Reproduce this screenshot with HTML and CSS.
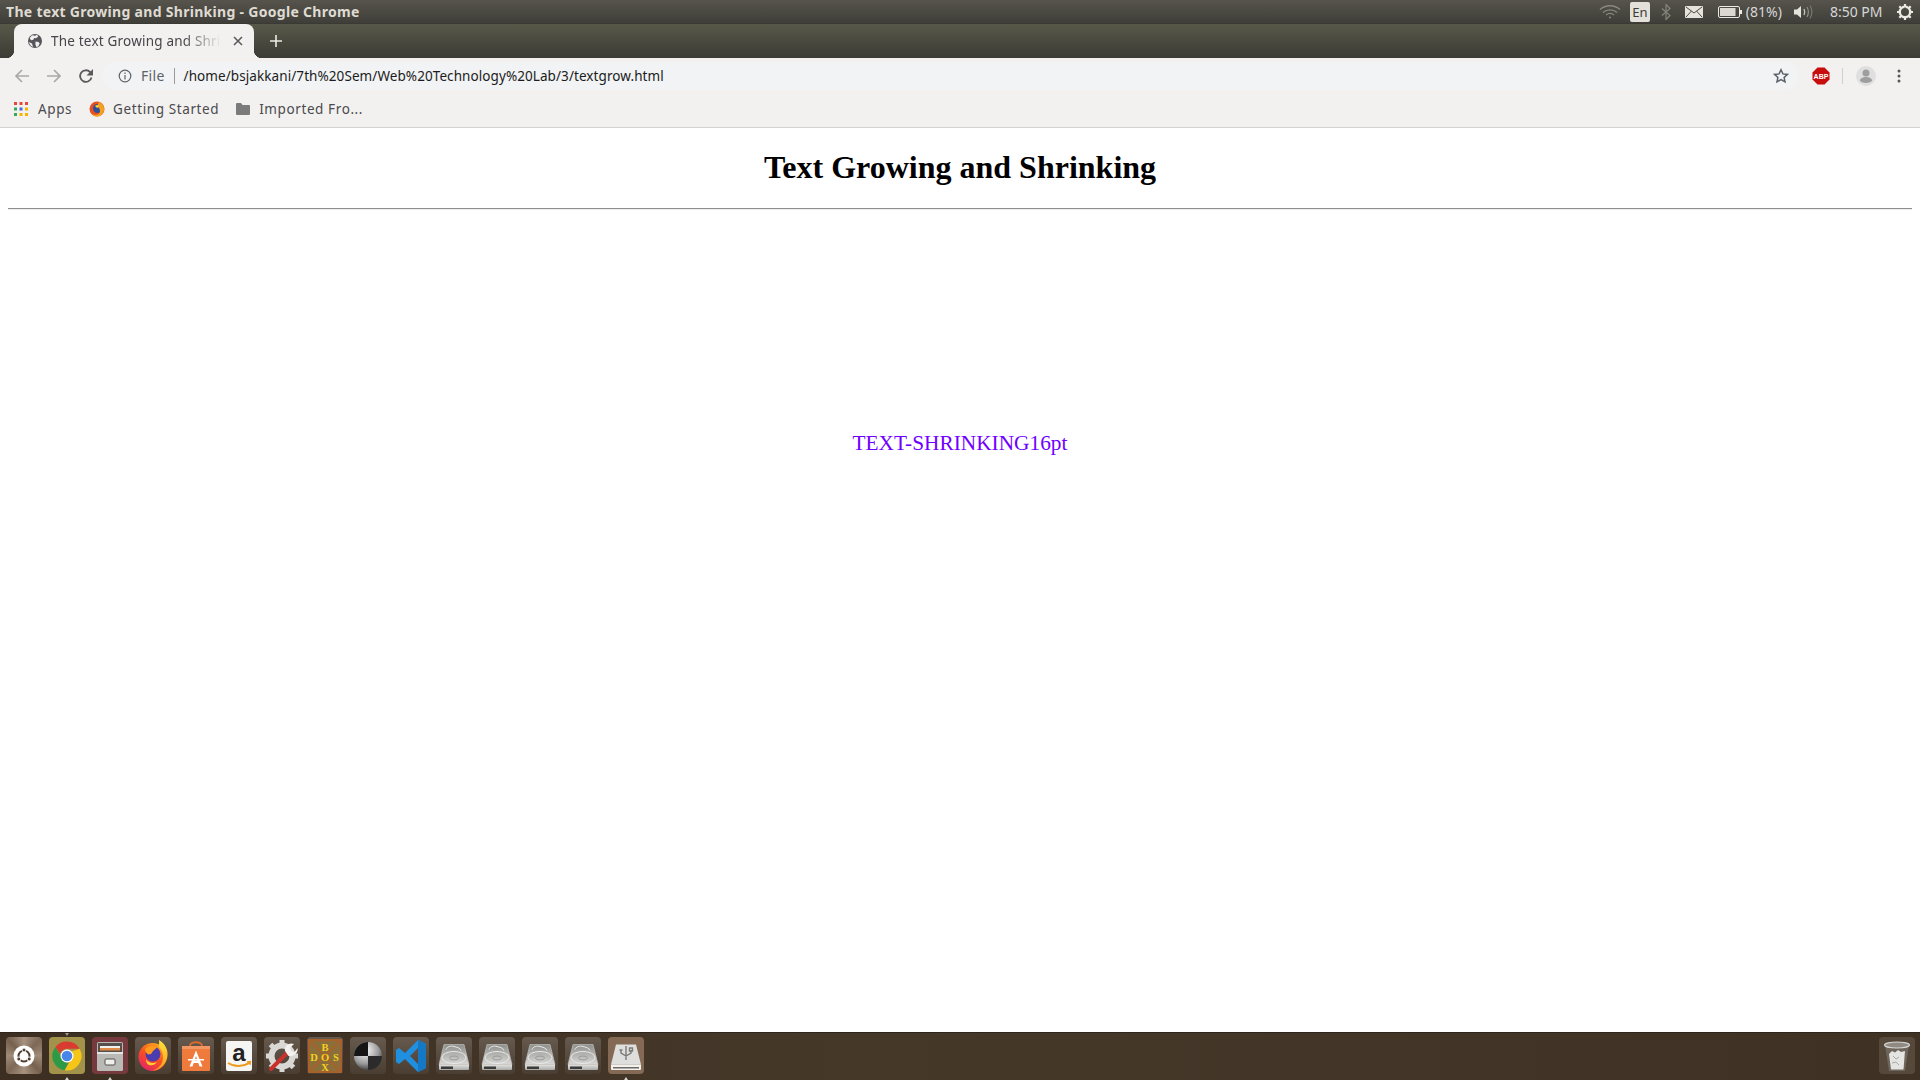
FILE: index.html
```html
<!DOCTYPE html>
<html lang="en">
<head>
<meta charset="utf-8">
<title>The text Growing and Shrinking</title>
<link rel="stylesheet" href="styles.css">
</head>
<body>
<svg class="defs" width="0" height="0" aria-hidden="true">
  <defs>
    <linearGradient id="hddTop" x1="0" y1="0" x2="0" y2="1"><stop offset="0" stop-color="#8f8f8c"/><stop offset="1" stop-color="#d8d8d6"/></linearGradient>
    <linearGradient id="hddFront" x1="0" y1="0" x2="0" y2="1"><stop offset="0" stop-color="#e4e4e2"/><stop offset="1" stop-color="#a9a9a7"/></linearGradient>
    <radialGradient id="ball" cx=".4" cy=".3" r=".8"><stop offset="0" stop-color="#fff"/><stop offset=".6" stop-color="#999"/><stop offset="1" stop-color="#222"/></radialGradient>
    <linearGradient id="fxBody" x1=".8" y1="0" x2=".2" y2="1"><stop offset="0" stop-color="#ffb01f"/><stop offset=".5" stop-color="#f9501f"/><stop offset="1" stop-color="#e3226b"/></linearGradient>
    <linearGradient id="fxFlame" x1=".5" y1="0" x2=".5" y2="1"><stop offset="0" stop-color="#ffe23a"/><stop offset="1" stop-color="#ff9a1c"/></linearGradient>
    <symbol id="hdd" viewBox="0 0 36 36">
      <path d="M8 6.500h20l5 20H3z" fill="url(#hddTop)" stroke="#bdbdbb" stroke-width=".7"/>
      <path d="M3 26.500h30v4.500a1 1 0 0 1-1 1H4a1 1 0 0 1-1-1z" fill="url(#hddFront)"/>
      <rect x="5" y="28.500" width="12" height="2.500" fill="#3b3b3a"/>
      <ellipse cx="18" cy="19.500" rx="12" ry="6" fill="none" stroke="#e9e9e7" stroke-width="1"/>
      <ellipse cx="18" cy="20" rx="4.500" ry="2" fill="none" stroke="#9b9b99" stroke-width="1"/>
      <path d="M10 11.500c1-3 5-4 8-3 3 .7 6 1.500 7 4" fill="none" stroke="#e9e9e7" stroke-width="1"/>
    </symbol>
  </defs>
</svg>

<header class="panel">
  <span class="panel-title">The text Growing and Shrinking - Google Chrome</span>
  <div class="indicators">
    <svg class="ind-wifi" width="22" height="16" viewBox="0 0 22 16" fill="none" stroke="#8a897f" stroke-width="1.300"><path d="M1 5.500c5.500-5 14.500-5 20 0"/><path d="M4 8.500c4-3.500 10-3.500 14 0"/><path d="M7 11c2.500-2 5.500-2 8 0"/><circle cx="11" cy="13.500" r="1" fill="#8a897f" stroke="none"/></svg>
    <span class="ind-lang">En</span>
    <svg class="ind-bt" width="10" height="16" viewBox="0 0 10 16" fill="none" stroke="#85847b" stroke-width="1.200"><path d="M1 4.500l8 7-4 4V.5l4 4-8 7"/></svg>
    <svg class="ind-mail" width="18" height="12" viewBox="0 0 18 12"><rect width="18" height="12" rx="1" fill="#e6e3de"/><path d="M1 1l8 6 8-6M1 11l5.500-6M17 11l-5.500-6" fill="none" stroke="#4b4a42" stroke-width="1"/></svg>
    <svg class="ind-batt" width="24" height="12" viewBox="0 0 24 12"><rect x=".5" y=".5" width="21" height="11" rx="1.500" fill="none" stroke="#eceae5"/><rect x="2" y="2" width="15.500" height="8" fill="#dcd9d2"/><rect x="22" y="4" width="2" height="4" fill="#eceae5"/></svg>
    <span class="ind-text ind-pct">(81%)</span>
    <svg class="ind-vol" width="20" height="16" viewBox="0 0 20 16" fill="none"><path d="M0 5.500h3l4-3.500v12l-4-3.500H0z" fill="#e6e3de"/><path d="M10 5c1 2 1 4 0 6" stroke="#c9c7c0" stroke-width="1.300"/><path d="M13 3c1.700 3 1.700 7 0 10" stroke="#8f8e85" stroke-width="1.200"/><path d="M16 1.500c2.300 4 2.300 9 0 13" stroke="#77766d" stroke-width="1.200"/></svg>
    <span class="ind-text ind-time">8:50 PM</span>
    <svg class="ind-gear" width="16" height="16" viewBox="0 0 16 16"><circle cx="8" cy="8" r="5.200" fill="none" stroke="#eceae5" stroke-width="2.400"/><path d="M8 0v3M8 13v3M0 8h3M13 8h3M2.300 2.300l2 2M11.700 11.700l2 2M2.300 13.700l2-2M11.700 4.300l2-2" stroke="#eceae5" stroke-width="2.200"/><path d="M8 3.500v4" stroke="#4b4a42" stroke-width="1.500"/></svg>
  </div>
</header>

<div class="tabstrip">
  <div class="tab">
    <svg class="tab-globe" width="16" height="16" viewBox="0 0 16 16"><circle cx="8" cy="8" r="7" fill="#55555a"/><path d="M5 2.200l3 .6 2.300-1 .8 2-2 1.500-1.800-.3-1 1.700-2.300.5L2.600 5zM8.500 8.500l3 .5 1.200 1.500-1.500 3-1.800.5-1-2.500zM2 9l3 1.500 1 3.500C4 13.500 2.500 11.500 2 9z" fill="#f1efed"/></svg>
    <span class="tab-title">The text Growing and Shri</span>
    <svg class="tab-close" width="10" height="10" viewBox="0 0 10 10"><path d="M1 1l8 8M9 1L1 9" stroke="#56565a" stroke-width="1.500"/></svg>
  </div>
  <svg class="newtab" width="12" height="12" viewBox="0 0 12 12"><path d="M6 0v12M0 6h12" stroke="#ecebe6" stroke-width="1.600"/></svg>
</div>

<div class="toolbar">
  <svg class="nav nav-back" width="16" height="16" viewBox="0 0 16 16" fill="none" stroke="#a9a9a9" stroke-width="1.700"><path d="M15 8H2M8 2L2 8l6 6"/></svg>
  <svg class="nav nav-fwd" width="16" height="16" viewBox="0 0 16 16" fill="none" stroke="#a9a9a9" stroke-width="1.700"><path d="M1 8h13M8 2l6 6-6 6"/></svg>
  <svg class="nav nav-reload" width="16" height="16" viewBox="0 0 16 16" fill="none"><path d="M13.500 9.500a5.800 5.800 0 1 1-1.500-5.500L14 6" stroke="#5a5a5c" stroke-width="1.800"/><path d="M15 1v6.500H8.500z" fill="#5a5a5c"/></svg>
  <div class="omnibox">
    <svg class="info" width="14" height="14" viewBox="0 0 14 14" fill="none" stroke="#5f6368" stroke-width="1.200"><circle cx="7" cy="7" r="5.800"/><path d="M7 6v4.500M7 3.500v1.500"/></svg>
    <span class="scheme">File</span>
    <span class="omni-sep"></span>
    <span class="url">/home/bsjakkani/7th%20Sem/Web%20Technology%20Lab/3/textgrow.html</span>
    <svg class="star" width="16" height="16" viewBox="0 0 16 16" fill="none" stroke="#5c6068" stroke-width="1.500"><path d="M8 1.800l1.900 4.100 4.500.5-3.300 3 .9 4.500L8 11.600l-4 2.300.9-4.500-3.300-3 4.500-.5z"/></svg>
  </div>
  <div class="extensions">
    <svg class="abp" width="18" height="18" viewBox="0 0 18 18"><path d="M5.500 .5h7l5 5v7l-5 5h-7l-5-5v-7z" fill="#c70d0d"/><text x="9" y="12" text-anchor="middle" class="abp-text">ABP</text></svg>
    <span class="ext-sep"></span>
    <svg class="avatar" width="20" height="20" viewBox="0 0 20 20"><circle cx="10" cy="10" r="10" fill="#dfdfdf"/><circle cx="10" cy="7" r="3.500" fill="#9e9e9e"/><path d="M4 15c0-3 3-4 6-4s6 1 6 4c-3 2.500-9 2.500-12 0z" fill="#9e9e9e"/></svg>
    <svg class="menu" width="4" height="14" viewBox="0 0 4 14"><circle cx="2" cy="2" r="1.500" fill="#56565a"/><circle cx="2" cy="7" r="1.500" fill="#56565a"/><circle cx="2" cy="12" r="1.500" fill="#56565a"/></svg>
  </div>
</div>

<nav class="bookmarks">
  <span class="bm bm-apps">
    <svg width="14" height="14" viewBox="0 0 14 14"><rect width="3" height="3" fill="#e8453c"/><rect x="5.500" width="3" height="3" fill="#e8453c"/><rect x="11" width="3" height="3" fill="#e8453c"/><rect y="5.500" width="3" height="3" fill="#34a853"/><rect x="5.500" y="5.500" width="3" height="3" fill="#4a67e0"/><rect x="11" y="5.500" width="3" height="3" fill="#f4b400"/><rect y="11" width="3" height="3" fill="#34a853"/><rect x="5.500" y="11" width="3" height="3" fill="#f4b400"/><rect x="11" y="11" width="3" height="3" fill="#f4b400"/></svg>
    Apps
  </span>
  <span class="bm bm-fx">
    <svg width="16" height="16" viewBox="0 0 16 16"><circle cx="8" cy="8" r="7.500" fill="#e8501f"/><circle cx="8.500" cy="7.500" r="4.500" fill="#2f4f9c"/><path d="M10 1c4 1.500 5.500 5 5 8s-3 6.500-7 6.500c-3 0-5-2-5-3 2 2 6 2 7.500-.5S10 6 8 5.500z" fill="#f4a21d"/><path d="M6 5c2-1.500 3.500-1 4 .5L8 7z" fill="#f6d23a"/></svg>
    Getting Started
  </span>
  <span class="bm bm-folder">
    <svg width="14" height="12" viewBox="0 0 14 12"><path d="M0 1a1 1 0 0 1 1-1h4l1.500 2H13a1 1 0 0 1 1 1v8a1 1 0 0 1-1 1H1a1 1 0 0 1-1-1z" fill="#7b7b7b"/></svg>
    Imported Fro...
  </span>
</nav>

<main class="page">
  <h1 class="heading">Text Growing and Shrinking</h1>
  <hr class="rule">
  <p class="shrink">TEXT-SHRINKING16pt</p>
</main>

<footer class="launcher">
  <div class="dock">
    <div class="tile tile-ubuntu"><svg viewBox="0 0 36 36"><circle cx="18" cy="18" r="10.500" fill="#fff"/><circle cx="18" cy="18" r="5.500" fill="none" stroke="#4f3a2c" stroke-width="2"/><circle cx="18" cy="12" r="2" fill="#4f3a2c" stroke="#fff"/><circle cx="12.800" cy="21" r="2" fill="#4f3a2c" stroke="#fff"/><circle cx="23.200" cy="21" r="2" fill="#4f3a2c" stroke="#fff"/></svg></div>
    <div class="tile tile-chrome">
      <span class="pip pip-top"></span><span class="pip pip-bottom"></span>
      <svg viewBox="0 0 36 36"><path d="M18 3.500a14.500 14.500 0 0 1 12.600 7.300H18a7.200 7.200 0 0 0-6.900 5L6.500 8.900A14.500 14.500 0 0 1 18 3.500z" fill="#d93b30"/><path d="M6.500 8.900l6.200 10.700a6 6 0 0 0 6.500 5.300l-3.500 7.400A14.500 14.500 0 0 1 6.500 8.900z" fill="#2f9a45"/><path d="M30.600 10.800A14.500 14.500 0 0 1 15.700 32.300l6.300-10.900a6 6 0 0 0 .5-8z" fill="#f5c518"/><circle cx="18" cy="18" r="6.500" fill="#fff"/><circle cx="18" cy="18" r="5.300" fill="#4a86e8"/></svg>
    </div>
    <div class="tile tile-files">
      <span class="pip pip-bottom"></span>
      <svg viewBox="0 0 36 36"><rect x="5" y="4" width="26" height="29" rx="1.500" fill="#b9b9b6"/><rect x="6" y="5" width="24" height="10" fill="#55504c"/><rect x="8" y="8" width="20" height="2.500" fill="#f1f1ef"/><rect x="8" y="10" width="20" height="2.500" fill="#e08a45"/><rect x="5" y="14" width="26" height="2" fill="#e4e4e2"/><rect x="13" y="21" width="10" height="6" rx="1" fill="#efefed" stroke="#55504c"/></svg>
    </div>
    <div class="tile"><svg viewBox="0 0 36 36"><circle cx="17.500" cy="19" r="14" fill="url(#fxBody)"/><circle cx="18" cy="16" r="7.500" fill="#4d3bb0"/><path d="M24 2c6 3.500 9 9 8.500 15.500-.5 8-7 15-15 15 6-2 10-6 10.500-12 .5-5-1.500-9-4.500-12 1-2 .5-4.500.5-6.500z" fill="url(#fxFlame)"/><path d="M10 11c3-3 8-4 12-1.500l-4 3.500-2 3-3 .5C11 15 10 13 10 11z" fill="#ff9a1c"/><path d="M11 21c2 3.500 6 5 11 3-1.500 2.500-5 4-8 3-2-.6-3-3-3-6z" fill="#ffcf33"/></svg></div>
    <div class="tile"><svg viewBox="0 0 36 36"><path d="M12 8c0-5 12-5 12 0" fill="none" stroke="#d96a2c" stroke-width="2"/><rect x="4" y="8" width="28" height="25" rx="1" fill="#ee7b3b"/><rect x="4" y="8" width="28" height="3" fill="#f29763"/><path d="M18 12.500l6.500 16h-3l-1.200-3.500h-4.600l-1.200 3.500h-3zM16.500 22.500h3L18 18z" fill="#fff"/><rect x="10" y="21" width="16" height="1.500" fill="#fff"/></svg></div>
    <div class="tile"><svg viewBox="0 0 36 36"><rect x="5" y="3" width="26" height="30" rx="2" fill="#f5f5f3"/><text x="18" y="23" text-anchor="middle" class="amz">a</text><path d="M7 25c6 4 15 4 22-.500" fill="none" stroke="#ef9a1b" stroke-width="2"/><path d="M26 24l3.500-.5-.5 3.500" fill="none" stroke="#ef9a1b" stroke-width="1.300"/></svg></div>
    <div class="tile"><svg viewBox="0 0 36 36"><circle cx="18" cy="18" r="10.500" fill="none" stroke="#dad8d5" stroke-width="6"/><path d="M18 2v6M18 28v6M2 18h6M28 18h6M6.500 6.500L11 11M25 25l4.500 4.500M6.500 29.500L11 25" stroke="#dad8d5" stroke-width="5"/><path d="M7 31L24 14" stroke="#c9322c" stroke-width="4" stroke-linecap="round"/><path d="M21 13c-1-5 4-9 9-7l-4 4 1.500 3 3 1 3-4c1 5-4 9-9 8z" fill="#f2f1ef"/></svg></div>
    <div class="tile"><svg viewBox="0 0 36 36"><rect x="1" y="1" width="34" height="34" fill="#a8612a"/><rect x="3" y="3" width="30" height="30" fill="#8a6f3a"/><path d="M3 3l30 30M33 3L3 33" stroke="#a8612a" stroke-width="2"/><text x="18" y="13" text-anchor="middle" class="dos">B</text><text x="7" y="22.500" text-anchor="middle" class="dos">D</text><text x="18" y="22.500" text-anchor="middle" class="dos">O</text><text x="29" y="22.500" text-anchor="middle" class="dos">S</text><text x="18" y="33" text-anchor="middle" class="dos">X</text></svg></div>
    <div class="tile"><svg viewBox="0 0 36 36"><circle cx="18" cy="18" r="14" fill="url(#ball)"/><path d="M18 4a14 14 0 0 0-14 14h14z" fill="#151515"/><path d="M18 32a14 14 0 0 0 14-14H18z" fill="#2b2b2b"/></svg></div>
    <div class="tile"><svg viewBox="0 0 36 36"><path d="M25 2l8 4v24l-8 4-13-13-6 5-3-2v-12l3-2 6 5zM25 10l-8 8 8 8z" fill="#1f8fe0"/><path d="M25 2l8 4v24l-8 4z" fill="#1478c4"/></svg></div>
    <div class="tile"><svg viewBox="0 0 36 36"><use href="#hdd"/></svg></div>
    <div class="tile"><svg viewBox="0 0 36 36"><use href="#hdd"/></svg></div>
    <div class="tile"><svg viewBox="0 0 36 36"><use href="#hdd"/></svg></div>
    <div class="tile"><svg viewBox="0 0 36 36"><use href="#hdd"/></svg></div>
    <div class="tile tile-usb">
      <span class="pip pip-bottom"></span>
      <svg viewBox="0 0 36 36"><path d="M8 6.500h20l5 20H3z" fill="#dededc"/><path d="M3 26.500h30V31a1 1 0 0 1-1 1H4a1 1 0 0 1-1-1z" fill="#f1f1ef"/><rect x="5" y="29" width="26" height="1.500" fill="#6e6a64"/><path d="M18 8v14M13 12v3l5 3 5-3v-3M11.500 12h3M21.500 10h3v3h-3z" fill="none" stroke="#7b7b78" stroke-width="1.400"/></svg>
    </div>
  </div>
  <div class="tile tile-trash"><svg viewBox="0 0 36 36"><path d="M6 7l4 26h16l4-26z" fill="#6e665c"/><ellipse cx="18" cy="7" rx="12.500" ry="3" fill="#8f8b84" stroke="#d8d6d2" stroke-width="1.200"/><path d="M10 16l3-3 3 1.500 3-2.500 3 2 4-1-1.500 18.500H12z" fill="#e4e4e2"/><path d="M14 18l3 3 3-2M13 25l4-1 3 3" fill="none" stroke="#a9a9a6" stroke-width="1"/></svg></div>
</footer>
</body>
</html>
```

FILE: styles.css
```css
* { box-sizing: border-box; }
html, body { height: 100%; }
body {
  margin: 0;
  display: flex;
  flex-direction: column;
  overflow: hidden;
  background: #fff;
  font-family: "Noto Sans", "Open Sans", sans-serif;
}
.defs { position: absolute; }

/* Ubuntu top panel */
.panel {
  flex: 0 0 24px;
  display: flex;
  align-items: center;
  justify-content: space-between;
  padding: 0 7.500px 0 6px;
  background: linear-gradient(#56544c, #3f3e38);
  border-bottom: 1px solid #3a3933;
}
.panel-title {
  font-size: 14px;
  font-weight: 700;
  color: #dfdbd2;
  letter-spacing: .3px;
  white-space: nowrap;
}
.indicators { display: flex; align-items: center; }
.ind-wifi { margin-right: 9px; }
.ind-lang {
  width: 20px;
  height: 20px;
  display: flex;
  align-items: center;
  justify-content: center;
  background: #e4e1db;
  color: #3d3c36;
  border-radius: 2px;
  font-size: 13px;
  margin-right: 11px;
}
.ind-bt { margin-right: 14px; }
.ind-mail { margin-right: 15px; }
.ind-batt { margin-right: 4px; }
.ind-text { color: #d6d8d8; font-size: 14px; white-space: nowrap; }
.ind-pct { margin-right: 12px; }
.ind-vol { margin-right: 16px; }
.ind-time { margin-right: 14px; }

/* Tab strip */
.tabstrip {
  flex: 0 0 34px;
  display: flex;
  align-items: center;
  padding-left: 14px;
  background: linear-gradient(#585849, #3c3b35);
}
.tab {
  position: relative;
  align-self: stretch;
  width: 240px;
  display: flex;
  align-items: center;
  padding: 0 11px 0 13px;
  background: #f2f1ef;
  border-radius: 8px 8px 0 0;
}
.tab::before,
.tab::after {
  content: "";
  position: absolute;
  bottom: 0;
  width: 8px;
  height: 8px;
}
.tab::before { left: -8px; background: radial-gradient(circle at 0 0, transparent 8px, #f2f1ef 8.500px); }
.tab::after { right: -8px; background: radial-gradient(circle at 100% 0, transparent 8px, #f2f1ef 8.500px); }
.tab-globe { flex: none; margin-right: 8px; }
.tab-title {
  flex: 1;
  min-width: 0;
  white-space: nowrap;
  font-size: 13.500px;
  letter-spacing: .2px;
  color: #45454a;
  -webkit-mask-image: linear-gradient(to right, #000 76%, transparent 98%);
  mask-image: linear-gradient(to right, #000 76%, transparent 98%);
}
.tab-close { flex: none; margin-left: 8px; }
.newtab { margin-left: 16px; }

/* Toolbar */
.toolbar {
  flex: 0 0 34px;
  display: flex;
  align-items: center;
  padding: 2px 0 0 14px;
  background: #f2f1ef;
}
.nav { flex: none; margin-right: 16px; }
.nav-fwd { margin-right: 16px; }
.nav-reload { margin-right: 8px; }
.omnibox {
  flex: 1;
  height: 28px;
  display: flex;
  align-items: center;
  padding: 0 9px 0 8px;
  background: #f1f3f5;
  border-radius: 14px;
  margin-right: 3px;
}
.info { flex: none; margin: 0 9px 0 8px; }
.scheme { font-size: 14px; letter-spacing: .3px; color: #5f6368; position: relative; top: -1px; }
.omni-sep { width: 1px; height: 16px; background: #9a9a9c; margin: 0 9px 0 9px; }
.url {
  flex: 1;
  font-size: 13.500px;
  color: #1c1c20;
  white-space: nowrap;
  letter-spacing: .08px;
}
.star { flex: none; }
.extensions {
  flex: none;
  display: flex;
  align-items: center;
  padding-right: 19px;
}
.abp { margin: 0 12px 0 11px; }
.abp-text { font: 700 7px "Liberation Sans", sans-serif; fill: #fff; }
.ext-sep { width: 1px; height: 16px; background: #cfcfcf; margin-right: 13px; }
.avatar { margin-right: 21px; }

/* Bookmarks */
.bookmarks {
  flex: 0 0 36px;
  display: flex;
  align-items: center;
  padding: 0 0 2px 14px;
  background: #f2f1ef;
  border-bottom: 1px solid #d3d2d0;
  font-size: 13.500px;
  letter-spacing: .6px;
  color: #4a4a4e;
}
.bm { display: flex; align-items: center; white-space: nowrap; }
.bm-apps { gap: 10px; margin-right: 17px; }
.bm-fx { gap: 8px; margin-right: 17px; }
.bm-folder { gap: 9px; }

/* Page */
.page {
  flex: 1;
  min-height: 0;
  padding: 21px 8px 0;
  background: #fff;
  font-family: "Liberation Serif", serif;
}
.heading {
  margin: 0 0 22px;
  text-align: center;
  font-size: 32px;
  font-weight: 700;
  line-height: 37px;
  color: #000;
}
.rule {
  margin: 0;
  border: 0;
  border-top: 1px solid #8f8f8f;
  border-bottom: 1px solid #eee;
}
.shrink {
  margin: 221px 0 0;
  text-align: center;
  font-size: 21.333px;
  line-height: 25px;
  color: #7000ff;
}

/* Launcher */
.launcher {
  flex: 0 0 48px;
  display: flex;
  align-items: flex-start;
  justify-content: space-between;
  padding: 4px 5px 0 6px;
  background: linear-gradient(90deg, #3c2f22, #463829 45%, #3f3224 100%);
  border-top: 1px solid #2e261d;
}
.dock { display: flex; gap: 7px; }
.tile {
  position: relative;
  flex: none;
  width: 36px;
  height: 37px;
  display: flex;
  align-items: center;
  justify-content: center;
  border-radius: 4px;
  background: linear-gradient(#665a4e, #4a3e32);
}
.tile > svg { width: 36px; height: 36px; display: block; }
.tile-ubuntu { background: conic-gradient(#a8917f, #7d6857, #a08a78, #76614f, #a8917f, #7d6857, #a08a78, #76614f, #a8917f); }
.tile-chrome { background: #a2924a; }
.tile-files { background: #763a3e; }
.tile-usb { background: #846a55; }
.tile-trash { background: #56493c; }
.pip {
  position: absolute;
  left: 50%;
  width: 0;
  height: 0;
  margin-left: -2px;
  border-left: 2px solid transparent;
  border-right: 2px solid transparent;
}
.pip-top { top: -4px; border-top: 3px solid #9c978f; }
.pip-bottom { bottom: -6px; border-bottom: 3px solid #d8d5d0; }
.amz { font: 700 24px "Liberation Sans", sans-serif; fill: #222; }
.dos { font: 700 10.500px "Liberation Serif", serif; fill: #f5d01f; }
```
